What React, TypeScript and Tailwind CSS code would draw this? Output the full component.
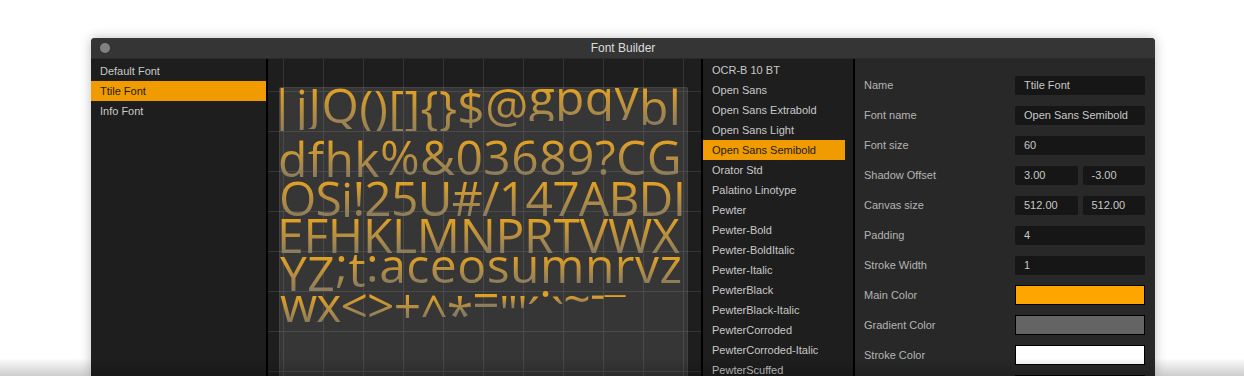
import React from "react"

// glyph metrics for Open Sans at 48px: [above baseline, below baseline] in em
const M: Record<string, [number, number]> = {
  "|": [0.76, 0.24], j: [0.75, 0.24], J: [0.714, 0.22], Q: [0.73, 0.2],
  "(": [0.76, 0.24], ")": [0.76, 0.24], "[": [0.76, 0.24], "]": [0.76, 0.24],
  "{": [0.76, 0.24], "}": [0.76, 0.24], $: [0.76, 0.1], "@": [0.72, 0.2],
  g: [0.55, 0.24], p: [0.55, 0.24], q: [0.55, 0.24], y: [0.535, 0.24],
  b: [0.76, 0.01], l: [0.76, 0], d: [0.76, 0.01], f: [0.76, 0], h: [0.76, 0], k: [0.76, 0],
  "%": [0.72, 0.01], "&": [0.72, 0.01], "?": [0.72, 0], i: [0.75, 0], "!": [0.714, 0],
  "#": [0.714, 0], "/": [0.714, 0], t: [0.64, 0.01], ";": [0.535, 0.15], ":": [0.535, 0],
  "<": [0.58, -0.12], ">": [0.58, -0.12], "+": [0.58, -0.12], "^": [0.714, -0.28],
  "*": [0.76, -0.42], "=": [0.46, -0.24], '"': [0.714, -0.48], "'": [0.714, -0.48],
  "´": [0.78, -0.6], "·": [0.33, -0.2], "`": [0.78, -0.6], "~": [0.42, -0.3],
  "-": [0.3, -0.2], "_": [-0.1, 0.17],
}

const lookup = (c: string): [number, number] => {
  if (M[c]) return M[c]
  if (/[A-Z0-9]/.test(c)) return [c === "O" || c === "S" || c === "C" || c === "G" ? 0.73 : 0.714, 0.01]
  return [0.55, 0.01]
}

const rows = [
  { text: "|jJQ()[]{}$@gpqybl", h: 52, sp: "mr-[0.4px]", first: "-ml-[11px]" },
  { text: "dfhk%&03689?CG", h: 41, sp: "mr-[0.45px]", first: "-ml-[2px]" },
  { text: "OSi!25U#/147ABDI", h: 37, sp: "-mr-[0.8px]", first: "-ml-[1px]" },
  { text: "EFHKLMNPRTVWX", h: 38, sp: "-mr-[0.3px]", first: "-ml-[3px]" },
  { text: "YZ;t:aceosumnrvz", h: 39, sp: "mr-[0.5px]", first: "ml-0" },
  { text: "wx<>+^*=\"'´·`~-_", h: 40, sp: "-mr-[0.9px]", first: "ml-0" },
]

function Glyph({ c, sp }: { c: string; sp: string }) {
  const [a, b] = lookup(c)
  const base = 42.6
  const top = base - a * 48
  const h = (a + b) * 48
  return (
    <span
      className={`block text-[48px] leading-[48px] font-medium text-transparent bg-clip-text ${sp}`}
      style={{
        marginTop: -top,
        backgroundImage: `linear-gradient(180deg, #e2a124 ${top}px, #877a60 ${top + h}px)`,
      }}
    >
      {c}
    </span>
  )
}

const fonts = [
  "OCR-B 10 BT",
  "Open Sans",
  "Open Sans Extrabold",
  "Open Sans Light",
  "Open Sans Semibold",
  "Orator Std",
  "Palatino Linotype",
  "Pewter",
  "Pewter-Bold",
  "Pewter-BoldItalic",
  "Pewter-Italic",
  "PewterBlack",
  "PewterBlack-Italic",
  "PewterCorroded",
  "PewterCorroded-Italic",
  "PewterScuffed",
]

function Field({ value }: { value: string }) {
  return (
    <div className="h-[19px] flex-1 rounded-[2px] bg-[#161616] pl-[9px] text-[11px] leading-[19px] text-[#c8c8c8]">
      {value}
    </div>
  )
}

function Row({ label, children }: { label: string; children: React.ReactNode }) {
  return (
    <div className="flex h-[30px] items-center">
      <div className="w-[160px] pl-[9px] text-[11px] text-[#b4b4b4]">{label}</div>
      <div className="flex w-[130px] gap-[5px]">{children}</div>
    </div>
  )
}

function Swatch({ color }: { color: string }) {
  return <div className={`h-[20px] w-[130px] border border-black ${color}`} />
}

export default function App() {
  return (
    <div className="relative h-[376px] w-[1244px] overflow-hidden bg-white font-['Liberation_Sans',Arial,sans-serif]">
      <div className="ml-[91px] mt-[38px] w-[1064px] overflow-hidden rounded-t-[4px] bg-[#282828] shadow-[0_0_12px_rgba(0,0,0,0.25)]">
        {/* Title bar */}
        <div className="relative flex h-[21px] items-center justify-center bg-[#353535] border-b border-[#2a2a2a]">
          <div className="absolute left-[9px] top-[5px] h-[10px] w-[10px] rounded-full bg-[#818181]" />
          <span className="text-[12px] text-[#dcdcdc]">Font Builder</span>
        </div>

        <div className="flex h-[318px]">
          {/* Font sets */}
          <div className="w-[175px] bg-[#1e1e1e] pt-[2px]">
            {["Default Font", "Ttile Font", "Info Font"].map((n) => (
              <div
                key={n}
                className={`h-[20px] pl-[9px] text-[11px] leading-[20px] ${
                  n === "Ttile Font" ? "bg-[#f09c00] text-[#1a1a1a]" : "text-[#c8c8c8]"
                }`}
              >
                {n}
              </div>
            ))}
          </div>
          <div className="w-[2px] bg-black" />

          {/* Canvas */}
          <div className="relative w-[433px] overflow-hidden bg-[#1e1e1e] bg-[linear-gradient(to_right,#343434_1px,transparent_1px),linear-gradient(to_bottom,#343434_1px,transparent_1px)] bg-[size:40px_40px] bg-[position:15px_32px]">
            <div className="absolute left-[11px] top-[28px] h-[409px] w-[409px] rounded-[2px] border border-[rgba(255,255,255,0.06)] bg-[rgba(255,255,255,0.11)] pt-[1px] font-['Open_Sans',sans-serif]">
              {rows.map((r) => (
                <div key={r.text} className={`flex items-start ${r.first}`} style={{ height: r.h }}>
                  {Array.from(r.text).map((c, i) => (
                    <Glyph key={i} c={c} sp={r.sp} />
                  ))}
                </div>
              ))}
            </div>
          </div>
          <div className="w-[2px] bg-black" />

          {/* Font list */}
          <div className="w-[150px] bg-[#1e1e1e] pt-[1px]">
            {fonts.map((f) => (
              <div
                key={f}
                className={`h-[20px] w-[142px] pl-[9px] text-[11px] leading-[20px] ${
                  f === "Open Sans Semibold" ? "bg-[#f09c00] text-[#1a1a1a]" : "text-[#c8c8c8]"
                }`}
              >
                {f}
              </div>
            ))}
          </div>
          <div className="w-[2px] bg-black" />

          {/* Properties */}
          <div className="flex-1 bg-[#282828] pt-[11px]">
            <Row label="Name"><Field value="Ttile Font" /></Row>
            <Row label="Font name"><Field value="Open Sans Semibold" /></Row>
            <Row label="Font size"><Field value="60" /></Row>
            <Row label="Shadow Offset"><Field value="3.00" /><Field value="-3.00" /></Row>
            <Row label="Canvas size"><Field value="512.00" /><Field value="512.00" /></Row>
            <Row label="Padding"><Field value="4" /></Row>
            <Row label="Stroke Width"><Field value="1" /></Row>
            <Row label="Main Color"><Swatch color="bg-[#ffa500]" /></Row>
            <Row label="Gradient Color"><Swatch color="bg-[#646464]" /></Row>
            <Row label="Stroke Color"><Swatch color="bg-white" /></Row>
            <Row label="Shadow Color"><Swatch color="bg-black" /></Row>
          </div>
        </div>
      </div>

      {/* bottom fade */}
      <div className="pointer-events-none absolute bottom-0 left-0 h-[18px] w-full bg-[linear-gradient(to_bottom,rgba(0,0,0,0),rgba(0,0,0,0.2))]" />
    </div>
  )
}
